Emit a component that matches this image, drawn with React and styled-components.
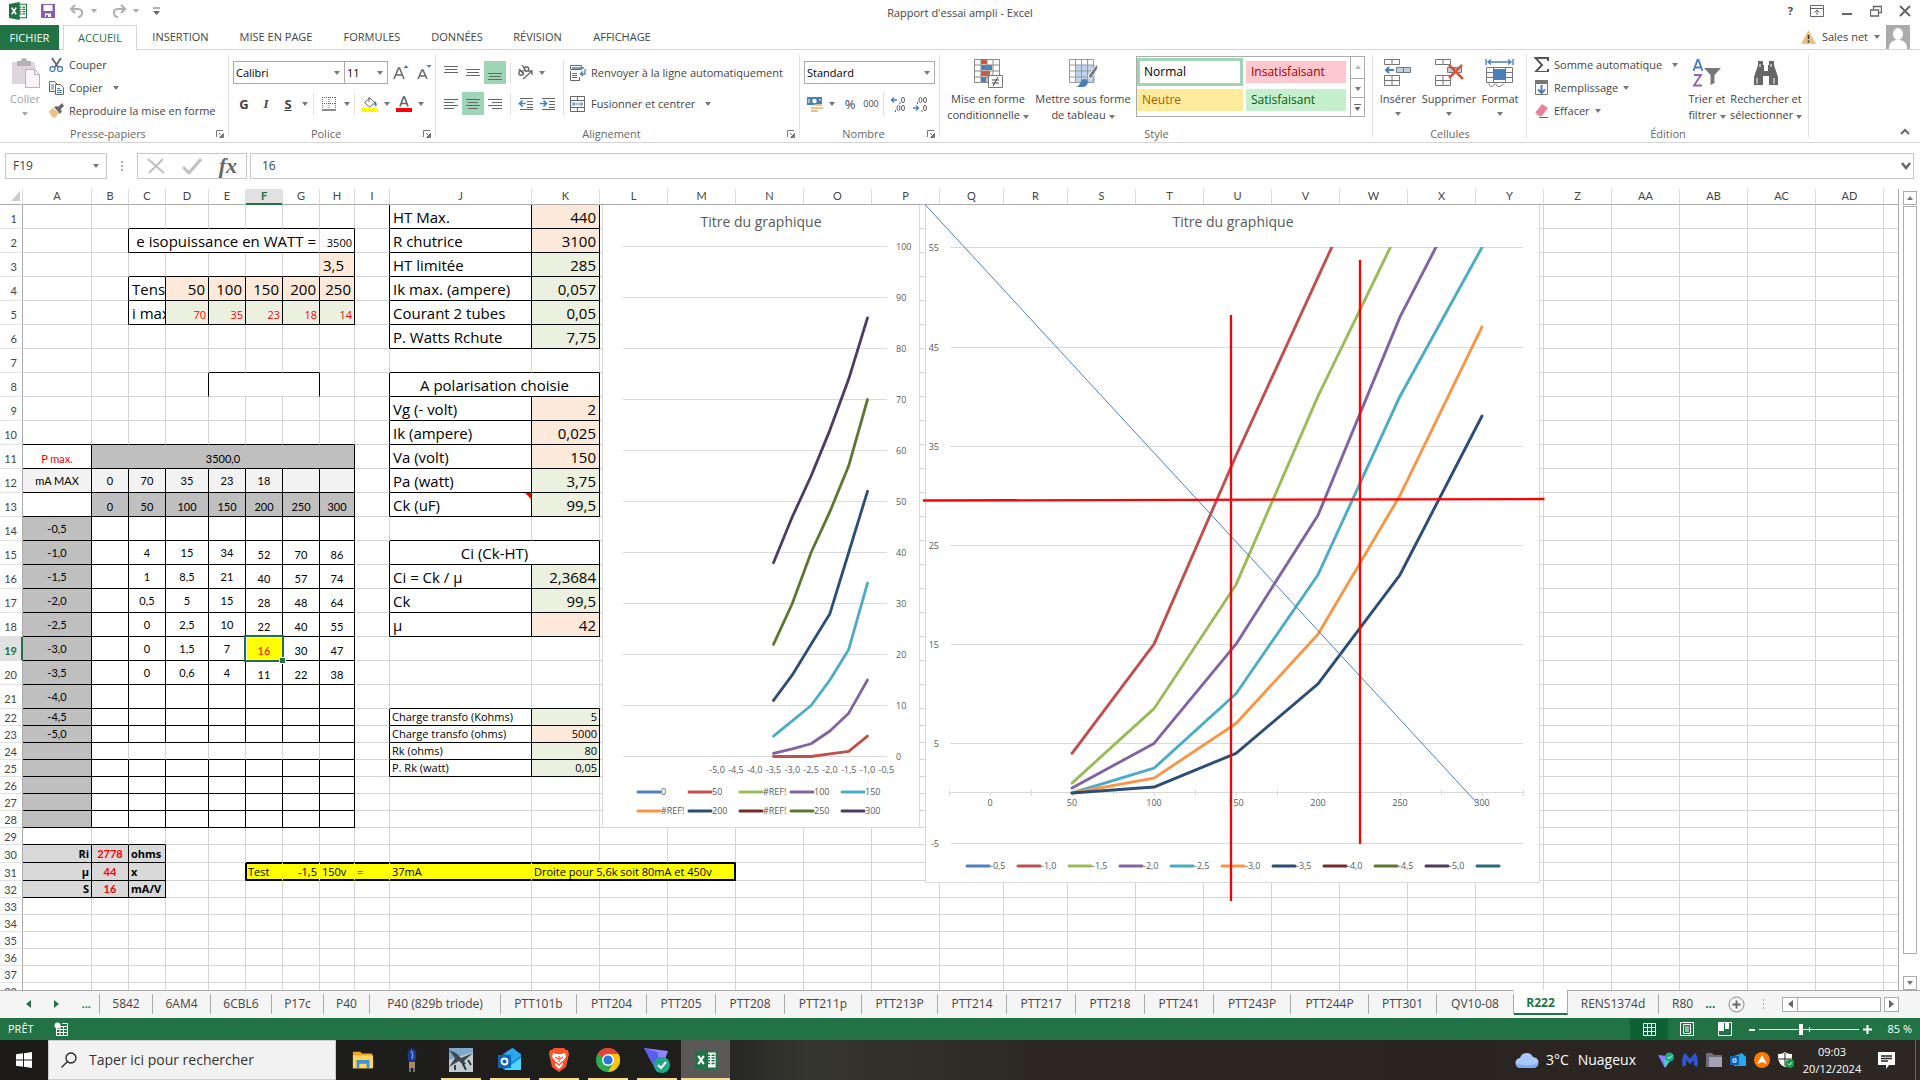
import React from 'react'
import styled, { createGlobalStyle, css } from 'styled-components'

const GlobalStyle = createGlobalStyle`
* { box-sizing: border-box; }
body { margin: 0; background: #fff; }
button, input, select { font: inherit; color: inherit; margin: 0; padding: 0; border: 0; background: none; border-radius: 0; }
`
const ui = `'Open Sans', 'Noto Sans', sans-serif`
const narrow = `Lato, 'Open Sans', sans-serif`

const Page = styled.div`
display: flex;
flex-direction: column;
height: 100vh;
overflow: hidden;
font-family: ${ui};
font-size: 11px;
line-height: 16px;
color: #444;
`
const Caret = styled.span`
display: inline-block;
flex: none;
border: 3px solid transparent;
border-top: 4px solid ${({ $color }) => $color || '#777'};
border-bottom: 0;
margin-top: ${({ $drop }) => ($drop ? 5 : 0)}px;
transform: ${({ $up }) => ($up ? 'rotate(180deg)' : 'none')};
`

/* ---------- title bar ---------- */
const TitleBar = styled.header`
display: flex;
flex: none;
align-items: center;
justify-content: space-between;
height: 25px;
padding: 0 9px 3px;
`
const Side = styled.div`
display: flex;
flex: 1;
align-items: center;
justify-content: ${({ $end }) => ($end ? 'flex-end' : 'flex-start')};
gap: ${({ $end }) => ($end ? '17px' : '14px')};
`
const Title = styled.h1`
margin: 0;
padding-top: 3px;
font-size: 11px;
font-weight: 400;
`
const PlainButton = styled.button`
display: flex;
align-items: center;
justify-content: center;
height: 20px;
gap: 6px;
`

/* ---------- ribbon tabs ---------- */
const Tabs = styled.nav`
display: flex;
flex: none;
height: 25px;
border-bottom: 1px solid #d4d4d4;
`
const Tab = styled.button`
width: ${({ $w }) => $w}px;
height: 24px;
font-size: 11px;
white-space: nowrap;
${({ $kind }) => $kind === 'file' && css`
height: 25px;
margin-right: 4px;
color: #fff;
background: #217346;
`}
${({ $kind }) => $kind === 'active' && css`
height: 25px;
color: #217346;
background: #fff;
border: 1px solid #d4d4d4;
border-bottom: 0;
`}
`
const User = styled.button`
display: flex;
align-items: center;
gap: 6px;
margin-left: auto;
margin-right: 10px;
height: 24px;
`

/* ---------- ribbon ---------- */
const Ribbon = styled.section`
display: flex;
flex: none;
position: relative;
height: 93px;
padding-top: 4px;
border-bottom: 1px solid #d4d4d4;
`
const Group = styled.div`
display: flex;
flex: none;
flex-direction: column;
width: ${({ $w }) => $w}px;
background: linear-gradient(#e1e1e1, #e1e1e1) right top / 1px 84px no-repeat;
`
const GroupBody = styled.div`
display: flex;
height: 72px;
padding-left: ${({ $pad }) => $pad}px;
`
const GroupFoot = styled.div`
display: flex;
align-items: center;
height: 16px;
color: #666;
span { flex: 1; text-align: center; }
svg { margin-right: 5px; }
`
const BigButton = styled.button`
display: flex;
flex: none;
flex-direction: column;
align-items: center;
width: ${({ $w }) => $w}px;
height: 70px;
padding-top: 4px;
white-space: nowrap;
color: ${({ $dim }) => ($dim ? '#a0a0a0' : '#444')};
svg { flex: none; margin-bottom: 3px; }
span { line-height: 16px; }
`
const Stack = styled.div`
display: flex;
flex-direction: column;
width: ${({ $w }) => ($w ? `${$w}px` : 'auto')};
margin-left: ${({ $left }) => $left || 0}px;
`
const Collapse = styled.div`
display: flex;
align-items: flex-end;
margin-left: auto;
padding-right: 10px;
`
const SmallButton = styled.button`
display: flex;
align-items: center;
gap: 5px;
height: 23px;
padding-bottom: ${({ $flat }) => ($flat ? 0 : 2)}px;
padding-left: ${({ $flat }) => ($flat ? 2 : 0)}px;
white-space: nowrap;
svg { flex: none; }
${Caret} { margin-left: ${({ $far }) => ($far ? 5 : 0)}px; }
`
const ToolRows = styled.div`
display: flex;
flex-direction: column;
gap: 8px;
padding-top: 7px;
`
const ToolRow = styled.div`
display: flex;
align-items: center;
height: 23px;
`
const Tool = styled.button`
display: flex;
align-items: center;
justify-content: center;
width: ${({ $w }) => $w || 22}px;
height: 23px;
font-size: ${({ $tiny }) => ($tiny ? 9 : 13)}px;
background: ${({ $on }) => ($on ? '#9fd5b7' : 'none')};
em { font-family: 'Liberation Serif', serif; font-weight: 700; }
u { font-weight: 700; }
`
const Line = styled.span`
width: 1px;
height: ${({ $h }) => $h || 22}px;
margin: ${({ $top }) => $top || 0}px ${({ $gap }) => $gap || 2}px 0;
background: #e1e1e1;
`
const SelectBox = styled.label`
display: flex;
align-items: center;
position: relative;
width: ${({ $w }) => $w}px;
height: 23px;
margin-left: ${({ $join }) => ($join ? '-1px' : 0)};
border: 1px solid #ababab;
color: #000;
select { width: 100%; height: 21px; padding-left: 2px; appearance: none; outline: 0; }
${Caret} { position: absolute; right: 4px; pointer-events: none; }
`
const Gallery = styled.div`
display: flex;
width: 229px;
height: 61px;
margin: 2px 0 0 4px;
border: 1px solid #ababab;
`
const Styles = styled.div`
display: grid;
flex: 1;
grid-template-columns: 106px 100px;
grid-auto-rows: 28px;
column-gap: 3px;
align-items: center;
padding-top: 1px;
`
const StyleChip = styled.button`
height: ${({ $on }) => ($on ? 28 : 22)}px;
padding-left: ${({ $on }) => ($on ? 4 : 5)}px;
text-align: left;
font-size: 12px;
color: ${({ $ink }) => $ink};
background: ${({ $bg }) => $bg};
border: ${({ $on }) => ($on ? '3px solid #9fd5b7' : '0')};
`
const GalleryNav = styled.div`
display: grid;
grid-template-rows: 21px 19px 19px;
width: 14px;
border-left: 1px solid #ababab;
button + button { border-top: 1px solid #ababab; }
`

/* ---------- formula bar ---------- */
const FormulaBar = styled.section`
display: flex;
flex: none;
align-items: center;
height: 46px;
padding: 0 6px 0 5px;
`
const Box = styled.div`
display: flex;
align-items: center;
height: 26px;
margin-left: ${({ $left }) => $left || 0}px;
border: 1px solid #c6c6c6;
${({ $w }) => ($w ? `width: ${$w}px;` : 'flex: 1;')}
padding: 0 ${({ $end, $pad }) => $end || $pad}px 0 ${({ $pad }) => $pad}px;
justify-content: space-between;
input { flex: 1; min-width: 0; outline: 0; font-size: 12px; }
`
const Fx = styled.em`
font-family: 'Liberation Serif', serif;
font-size: 22px;
font-weight: 700;
color: #666;
`
const Grip = styled.span`
width: 2px;
height: 11px;
margin: 0 ${({ $gap }) => $gap}px;
background: repeating-linear-gradient(#aaa 0 2px, transparent 2px 4px);
`

/* ---------- sheet ---------- */
const Work = styled.main`
display: flex;
flex: 1;
min-height: 0;
`
const Pane = styled.div`
flex: 1;
min-width: 0;
position: relative;
overflow: hidden;
border-right: 1px solid #ababab;
`
const Table = styled.table`
table-layout: fixed;
border-collapse: separate;
border-spacing: 0;
width: ${({ $w }) => $w}px;
font-size: 11px;
line-height: 14px;
color: #000;
`
const ColHead = styled.th`
height: 16px;
padding: 0 0 2px;
font-family: ${narrow};
font-weight: 400;
line-height: 13px;
color: ${({ $on }) => ($on ? '#217346' : '#444')};
background: ${({ $on }) => ($on ? '#e1e1e1' : '#fff')};
border-right: 1px solid #dcdcdc;
border-bottom: 1px solid #ababab;
${({ $on }) => $on && 'font-weight: 700; box-shadow: inset 0 -1px #217346; border-bottom-color: #217346;'}
`
const RowHead = styled.th`
height: ${({ $h }) => $h}px;
padding: 0 ${({ $on }) => ($on ? 4 : 5)}px ${({ $h }) => ($h > 20 ? 3 : 1)}px 0;
font-family: ${narrow};
font-weight: ${({ $on }) => ($on ? 700 : 400)};
line-height: 13px;
text-align: right;
vertical-align: bottom;
color: ${({ $on }) => ($on ? '#217346' : '#444')};
background: ${({ $on }) => ($on ? '#e1e1e1' : '#fff')};
border-right: ${({ $on }) => ($on ? '2px solid #217346' : '1px solid #ababab')};
border-bottom: 1px solid #e1e1e1;
`
const Cell = styled.td`
position: relative;
z-index: ${({ $top }) => ($top ? 1 : 'auto')};
padding: 0;
background: ${({ $bg }) => $bg || '#fff'};
border-right: 1px solid ${({ $right }) => $right};
border-bottom: 1px solid ${({ $bottom }) => $bottom};
box-shadow: ${({ $shadow }) => $shadow || 'none'};
`
const CellText = styled.div`
display: flex;
height: ${({ $h }) => $h - 1}px;
padding: 0 ${({ $big }) => ($big ? 3 : 2)}px ${({ $low }) => ($low ? 2 : 0)}px;
overflow: hidden;
white-space: nowrap;
justify-content: ${({ $align }) => ({ r: 'flex-end', c: 'center' }[$align] || 'flex-start')};
align-items: ${({ $low }) => ($low ? 'flex-end' : 'center')};
font-family: ${({ $align, $big }) => ($align === 'c' && !$big ? narrow : ui)};
font-size: ${({ $big }) => ($big ? 15 : 11)}px;
font-weight: ${({ $bold }) => ($bold ? 700 : 400)};
line-height: ${({ $big }) => ($big ? 20 : 14)}px;
color: ${({ $red }) => ($red ? '#f00' : '#000')};
`
const Selection = styled.span`
position: absolute;
inset: -2px;
border: 2px solid #217346;
box-shadow: inset 0 0 0 1px #fff;
&::after {
content: '';
position: absolute;
right: -3px;
bottom: -3px;
width: 5px;
height: 5px;
background: #217346;
outline: 1px solid #fff;
}
`
const Note = styled.span`
position: absolute;
top: 0;
right: 0;
border: 3px solid #f00;
border-left-color: transparent;
border-bottom-color: transparent;
`
const Corner = styled.svg`
display: block;
margin-left: 11px;
`
const Chart = styled.svg`
position: absolute;
z-index: 2;
left: ${({ $x }) => $x}px;
top: 16px;
background: ${({ $clear }) => ($clear ? 'none' : '#fff')};
pointer-events: none;
text { fill: #595959; font-size: 9px; }
.title { font-size: 14px; }
`
const VScroll = styled.div`
display: flex;
flex: none;
flex-direction: column;
width: 21px;
padding: 2px 3px 0 4px;
`
const ScrollButton = styled.button`
display: flex;
flex: none;
align-items: center;
justify-content: center;
width: ${({ $w }) => $w || 14}px;
height: ${({ $h }) => $h || 14}px;
border: 1px solid #ababab;
background: #fff;
`
const VThumb = styled.div`
flex: 1;
margin: 1px 0 22px;
border: 1px solid #ababab;
`

/* ---------- sheet tabs, status, taskbar ---------- */
const SheetTabs = styled.nav`
display: flex;
flex: none;
align-items: flex-start;
height: 28px;
background: #f5f5f5;
border-top: 1px solid #ababab;
`
const TabNav = styled.div`
display: flex;
flex: none;
align-items: center;
justify-content: space-between;
width: 99px;
height: 26px;
padding: 0 8px 0 26px;
color: #217346;
font-weight: 700;
`
const SheetTab = styled.button`
flex: none;
width: ${({ $w }) => $w}px;
height: 20px;
margin-top: 3px;
font-size: 12px;
white-space: nowrap;
border-right: 1px solid #ababab;
border-left: ${({ $first }) => ($first ? '1px solid #ababab' : 0)};
${({ $on }) => $on && css`
height: 25px;
margin-top: -1px;
padding-top: 2px;
font-weight: 700;
color: #217346;
background: #fff;
border-bottom: 2px solid #217346;
`}
`
const TabsEnd = styled.div`
display: flex;
flex: 1;
min-width: 0;
align-items: center;
height: 26px;
padding-left: 13px;
font-size: 12px;
white-space: nowrap;
b { margin-left: 12px; color: #217346; }
svg { flex: none; margin-left: ${({ $gap }) => $gap}px; }
`
const HThumb = styled.div`
width: 83px;
height: 15px;
margin-right: 3px;
background: #fff;
border: 1px solid #ababab;
border-left: 0;
`
const HScroll = styled.div`
display: flex;
margin-left: auto;
margin-right: 21px;
svg { margin: 0; }
`
const Status = styled.footer`
display: flex;
flex: none;
align-items: center;
height: 22px;
padding: 0 8px;
color: #fff;
background: #217346;
`
const Macro = styled.button`
display: flex;
margin-left: 20px;
`
const ViewButton = styled.button`
display: flex;
align-items: center;
justify-content: center;
width: 38px;
height: 21px;
background: ${({ $on }) => ($on ? '#0e6135' : 'none')};
`
const Zoom = styled.input`
width: 100px;
height: 14px;
margin: 0 4px;
appearance: none;
outline: 0;
background: linear-gradient(#fff, #fff) center / 100% 1px no-repeat, linear-gradient(#fff, #fff) center / 1px 5px no-repeat;
&::-webkit-slider-thumb { appearance: none; width: 4px; height: 11px; background: #fff; }
`
const Percent = styled.span`
width: 40px;
text-align: right;
white-space: nowrap;
`
const Push = styled.span`
flex: 1;
`
const Taskbar = styled.div`
display: flex;
flex: none;
align-items: center;
height: 40px;
color: #fff;
background: linear-gradient(90deg, #1c1b1a 0%, #1f1f1d 36%, #353530 42%, #2c2723 55%, #2a2420 75%, #2d2824 100%);
`
const Start = styled.button`
display: flex;
justify-content: center;
width: 48px;
`
const Search = styled.label`
display: flex;
align-items: center;
gap: 12px;
width: 288px;
height: 40px;
padding-left: 12px;
margin-right: 2px;
background: #f2f2f2;
border: 1px solid #ccc;
color: #222;
input { flex: 1; min-width: 0; font-size: 14px; outline: 0; }
input::placeholder { color: #333; opacity: 1; }
`
const TaskButton = styled.button`
display: flex;
align-items: center;
justify-content: center;
width: 49px;
height: 40px;
${({ $run }) => $run && `
background: linear-gradient(#fcdf8e, #fcdf8e) center bottom / 40px 2px no-repeat;
`}
${({ $on }) => $on && `
background: #5a5957;
box-shadow: inset 0 -2px #fcdf8e;
`}
`
const Weather = styled.button`
display: flex;
align-items: center;
gap: 7px;
margin: 0 22px 0 auto;
font-size: 14px;
span + span { margin-left: 2px; }
`
const Tray = styled.div`
display: flex;
gap: 8px;
`
const Clock = styled.div`
display: flex;
flex-direction: column;
align-items: center;
width: 76px;
line-height: 17px;
font-size: 11px;
`
const Action = styled.button`
display: flex;
width: 46px;
height: 40px;
align-items: center;
justify-content: center;
margin-right: 4px;
padding-right: 12px;
border-right: 1px solid #666;
`

/* ---------- icons ---------- */
const Ico = ({ w = 16, h = w, box, children }) => (
  <svg width={w} height={h} viewBox={box || `0 0 ${w} ${h}`} fill="none" aria-hidden="true">{children}</svg>
)
const G = '#666'
const B = '#4a7fb8'

const ExcelLogo = ({ size = 16 }) => (
  <Ico w={size} box="0 0 16 16">
    <path d="M8 2h7.5v12H8z" fill="#fff" stroke="#217346" />
    <path d="M9 4.5h2M9 6.5h2M9 8.5h2M9 10.5h2M12 4.5h2.3M12 6.5h2.3M12 8.5h2.3M12 10.5h2.3" stroke="#217346" />
    <path d="M0 1.8 9.5 0v16L0 14.2z" fill="#217346" />
    <path d="m2.4 5 4 6M6.4 5l-4 6" stroke="#fff" strokeWidth="1.5" />
  </Ico>
)
const Lines = ({ rows, y = 3 }) => (
  <Ico w={14} h={16}>
    {rows.map(([a, b], i) => <path key={i} d={`M${a} ${y + i * 3 + 0.5}H${b}`} stroke={G} />)}
  </Ico>
)
const Launcher = () => (
  <Ico w={8}><path d="M.5 7V.5H7" stroke="#777" /><path d="m3 3 3 3M7.5 3.5v4h-4z" stroke="#777" fill="#777" /></Ico>
)
const IndentIcon = ({ left }) => (
  <Ico w={16}>
    <path d="M2 2.5h13M9 5.5h6M9 8.5h6M9 11.5h6M2 13.5h13" stroke={G} />
    <path d={left ? 'M7.5 7.5H2M4.5 4.5l-3 3 3 3' : 'M0 7.5h5.5M3.5 4.5l3 3-3 3'} stroke={B} strokeWidth="1.7" />
  </Ico>
)
const DecimalIcon = ({ less }) => (
  <Ico w={16}>
    <path d={less ? 'M1 12h5M4 9.5l2.500 2.500L4 14.500' : 'M7 4H2M4 1.500L1.500 4 4 6.500'} stroke={B} strokeWidth="1.400" />
    <g fill="none" stroke={G}>
      <ellipse cx={13} cy="4" rx="1.500" ry="2.700" />
      {less && <ellipse cx="8.500" cy="4" rx="1.500" ry="2.700" />}
      <ellipse cx="13" cy="12" rx="1.500" ry="2.700" />
      {!less && <ellipse cx="8.500" cy="12" rx="1.500" ry="2.700" />}
      <path d={less ? 'M5.500 6v2M10 14v2' : 'M10 6v2M5.500 14v2'} />
    </g>
  </Ico>
)
const CellsIcon = ({ kind }) => (
  <Ico w={30} h={30}>
    {kind === 'format' ? (
      <>
        <path d="M1 1v6M28 1v6M3 4h23M6 1.500 3 4l3 2.500M23 1.500 26 4l-3 2.500" stroke={B} strokeWidth="1.400" />
        <path d="M1.500 9.500h26v15h-26zM1.500 14.500h26M1.500 19.500h26M8.500 9.500v15M20.500 9.500v15" stroke="#777" />
        <path d="M9 11h11v11H9z" fill={B} />
        <path d="M4 25.500c0 4 4 4 6 0M11 25.500c0 4 5 4 8 0" stroke="#777" />
      </>
    ) : (
      <>
        <path d="M1.500 1.500h15v5h-15zM9 1.500v5M1.500 17.500h15v10h-15zM9 17.500v10M1.500 22.500h15" stroke="#777" />
        <path d="M13.500 9.500h14v5h-14zM20.500 9.500v5" fill="#bdd2e8" stroke="#777" />
        {kind === 'insert' && <path d="M11 12H3M6 9l-3 3 3 3" stroke={B} strokeWidth="2" />}
        {kind === 'delete' && <path d="m15 7 14 14M28 7 15 20" stroke="#d65532" strokeWidth="2.500" />}
      </>
    )}
  </Ico>
)
const TableIcon = ({ brush }) => (
  <Ico w={30} h={30}>
    <path d="M1 1h26v24H1z" fill="#fff" />
    {brush ? (
      <>
        <path d="M7 7h20v18H7z" fill="#bdd2e8" />
        <path d="M1.500 1.500h24v23h-24zM1.500 7h24M1.500 13h24M1.500 19h24M7.500 1.500v23M13.500 1.500v23M19.500 1.500v23" stroke="#999" />
        <path d="m29 6-9 12 3 3 7-11z" fill="#777" stroke="#fff" />
        <path d="M8 29c5-1 4-8 9-8 4 1 4 7-2 8z" fill={B} />
      </>
    ) : (
      <>
        <path d="M8 1h6v5H8zM8 13h9v5H8z" fill="#d65532" />
        <path d="M8 7h11v5H8zM8 19h5v5H8z" fill={B} />
        <path d="M1.500 1.500h25v23h-25zM1.500 7h25M1.500 13h25M1.500 19h25M8 1.500v23M14 1.500v23M20 1.500v23" stroke="#888" />
        <path d="M15.500 17.500h14v12h-14z" fill="#fff" stroke="#777" />
        <path d="M19 22h7M19 25h7M25 19l-5 9" stroke="#444" />
      </>
    )}
  </Ico>
)

/* ---------- sheet data ---------- */
const columns = [
  ['A', 69], ['B', 37], ['C', 37], ['D', 43], ['E', 37], ['F', 37], ['G', 37], ['H', 35], ['I', 35], ['J', 142], ['K', 68],
  ['L', 68], ['M', 68], ['N', 68], ['O', 68], ['P', 68], ['Q', 64], ['R', 64], ['S', 68], ['T', 68], ['U', 68], ['V', 68],
  ['W', 68], ['X', 68], ['Y', 68], ['Z', 68], ['AA', 68], ['AB', 68], ['AC', 68], ['AD', 68], ['', 68],
]
const tableWidth = columns.reduce((sum, c) => sum + c[1], 23)
const rowHeight = r => (r <= 21 ? 24 : r === 30 || r === 31 ? 18 : 17)

const peach = '#fde9d9'
const green = '#ebf1de'
const grey = '#bfbfbf'
const pale = '#f2f2f2'
const silver = '#d9d9d9'

const cells = {
  C2: { t: 'e isopuissance en WATT =', big: 1, align: 'r', span: 5 },
  H2: { t: '3500', align: 'r', low: 1 },
  H3: { t: '3,5', big: 1, bg: peach },
  C4: { t: 'Tens', big: 1 },
  C5: { t: 'i max', big: 1 },
  E8: { t: '', span: 3 },
  A11: { t: 'P max.', align: 'c', low: 1, red: 1 },
  B11: { t: '3500,0', align: 'c', low: 1, span: 7, bg: grey },
  A12: { t: 'mA MAX', align: 'c', bg: pale },
  A13: { t: '' },
  J8: { t: 'A polarisation choisie', big: 1, align: 'c', span: 2 },
  J15: { t: 'Ci (Ck-HT)', big: 1, align: 'c', span: 2 },
  F31: { t: 'Test' },
  G31: { t: '-1,5', align: 'r' },
  H31: { t: '150v' },
  I31: { t: '=' },
  J31: { t: '37mA' },
  K31: { t: 'Droite pour 5,6k soit 80mA et 450v', span: 3 },
}
const letters = 'ABCDEFGH'.split('')
;['50', '100', '150', '200', '250'].forEach((t, i) => { cells[letters[i + 3] + 4] = { t, big: 1, align: 'r', bg: peach } })
;['70', '35', '23', '18', '14'].forEach((t, i) => { cells[letters[i + 3] + 5] = { t, align: 'r', low: 1, red: 1, bg: green } })
;['0', '70', '35', '23', '18', '', ''].forEach((t, i) => { cells[letters[i + 1] + 12] = { t, align: 'c', bg: pale } })
;['0', '50', '100', '150', '200', '250', '300'].forEach((t, i) => { cells[letters[i + 1] + 13] = { t, align: 'c', low: 1, bg: grey } })
for (let r = 14; r <= 28; r++) {
  const v = (r - 13) / 2
  cells['A' + r] = { t: r < 24 ? '-' + v.toFixed(1).replace('.', ',') : '', align: 'c', bg: grey }
}
const readings = [
  [4, 15, 34, 52, 70, 86],
  [1, 8.5, 21, 40, 57, 74],
  [0.5, 5, 15, 28, 48, 64],
  [0, 2.5, 10, 22, 40, 55],
  [0, 1.5, 7, 16, 30, 47],
  [0, 0.6, 4, 11, 22, 38],
]
readings.forEach((row, i) => row.forEach((v, j) => {
  cells[letters[j + 2] + (15 + i)] = { t: String(v).replace('.', ','), align: 'c', low: j > 2 }
}))
Object.assign(cells.F19, { bg: '#ff0', red: 1, selected: 1 })

const pair = (row, label, value, bg, big = 1) => {
  cells['J' + row] = { t: label, big }
  cells['K' + row] = { t: value, big, align: 'r', bg }
}
pair(1, 'HT Max.', '440', peach)
pair(2, 'R chutrice', '3100', peach)
pair(3, 'HT limitée', '285', green)
pair(4, 'Ik max. (ampere)', '0,057', green)
pair(5, 'Courant 2 tubes', '0,05', green)
pair(6, 'P. Watts Rchute', '7,75', green)
pair(9, 'Vg (- volt)', '2', peach)
pair(10, 'Ik (ampere)', '0,025', peach)
pair(11, 'Va (volt)', '150', peach)
pair(12, 'Pa (watt)', '3,75', green)
pair(13, 'Ck (uF)', '99,5', green)
pair(16, 'Ci = Ck / µ', '2,3684', green)
pair(17, 'Ck', '99,5', green)
pair(18, 'µ', '42', peach)
pair(22, 'Charge transfo (Kohms)', '5', green, 0)
pair(23, 'Charge transfo (ohms)', '5000', peach, 0)
pair(24, 'Rk (ohms)', '80', green, 0)
pair(25, 'P. Rk (watt)', '0,05', green, 0)
cells.J13.note = 1
;[['Ri', '2778', 'ohms'], ['µ', '44', 'x'], ['S', '16', 'mA/V']].forEach(([a, b, c], i) => {
  cells['A' + (30 + i)] = { t: a, align: 'r', bold: 1, bg: silver }
  cells['B' + (30 + i)] = { t: b, align: 'c', bold: 1, red: 1, bg: silver }
  cells['C' + (30 + i)] = { t: c, bold: 1, bg: silver }
})

// black edges, keyed by "column index,row"
const rights = new Set()
const bottoms = new Set()
const frame = (c1, r1, c2, r2, inner = true) => {
  for (let r = r1; r <= r2; r++) {
    for (let c = c1; c <= c2; c++) {
      if (inner || c === c2) rights.add(`${c},${r}`)
      if (inner || r === r2) bottoms.add(`${c},${r}`)
      if (c === c1) rights.add(`${c - 1},${r}`)
      if (r === r1) bottoms.add(`${c},${r - 1}`)
    }
  }
}
frame(2, 2, 7, 2, false)
frame(2, 4, 7, 5)
frame(4, 8, 6, 8, false)
;[4, 5, 6].forEach(c => bottoms.delete(`${c},8`))
rights.add('7,3')
frame(0, 11, 7, 23)
frame(0, 24, 7, 24, false)
rights.add('0,24')
frame(0, 25, 7, 28)
frame(0, 30, 2, 32)
frame(9, 1, 10, 6)
frame(9, 8, 10, 13)
frame(9, 15, 10, 18)
frame(9, 22, 10, 25)
frame(5, 31, 12, 31, false)

const isTest = (c, r) => r === 31 && c >= 5 && c <= 12
const SheetRow = ({ r }) => {
  const h = rowHeight(r)
  const out = []
  for (let c = 0; c < columns.length; c++) {
    const cell = cells[columns[c][0] + r] || {}
    const span = cell.span || 1
    const last = c + span - 1
    const test = isTest(c, r)
    const line = test ? '#ff0' : '#d4d4d4'
    const shadow = test && ['inset 0 1px #000', 'inset 0 -1px #000', c === 5 && 'inset 1px 0 #000', last === 12 && 'inset -1px 0 #000'].filter(Boolean).join(', ')
    out.push(
      <Cell key={c} colSpan={span} $bg={cell.bg || (test && '#ff0')} $shadow={shadow} $top={cell.selected}
        $right={rights.has(`${last},${r}`) ? '#000' : line} $bottom={bottoms.has(`${c},${r}`) ? '#000' : line}>
        {cell.t && (
          <CellText $h={h} $big={cell.big} $align={cell.align} $low={cell.low} $red={cell.red} $bold={cell.bold}>{cell.t}</CellText>
        )}
        {cell.selected && <Selection />}
        {cell.note && <Note />}
      </Cell>
    )
    c = last
  }
  return <tr><RowHead scope="row" $h={h} $on={r === 19}>{r}</RowHead>{out}</tr>
}

/* ---------- charts ---------- */
const palette = ['#4f81bd', '#c0504d', '#9bbb59', '#8064a2', '#4bacc6', '#f79646', '#2c4d75', '#772c2a', '#5f7530', '#4d3b62', '#276a7c']

const Legend = ({ x, y, color, label }) => (
  <g>
    <path d={`M${x + 1} ${y}h22`} stroke={color} strokeWidth="3" strokeLinecap="round" />
    <text x={x + 24} y={y + 3}>{label}</text>
  </g>
)
const GridChart = () => {
  const y = v => 551.5 - v * 5.1
  const x = i => 265.5 - i * 18.8
  const colors = [1, 3, 4, 6, 8, 9]
  const legend = [['0', 0], ['50', 1], ['#REF!', 2], ['100', 3], ['150', 4], ['#REF!', 5], ['200', 6], ['#REF!', 7], ['250', 8], ['300', 9]]
  return (
    <Chart $x={602} width="318" height="623" fill="none">
      <path d="M.5 0V622.500H317.500V0" stroke="#d9d9d9" />
      <text className="title" x="159" y="22" textAnchor="middle">Titre du graphique</text>
      {[0, 10, 20, 30, 40, 50, 60, 70, 80, 90, 100].map(v => (
        <g key={v}>
          <path d={`M21 ${Math.floor(y(v)) + 0.5}H285`} stroke="#d9d9d9" />
          <text x="294" y={y(v) + 3}>{v}</text>
        </g>
      ))}
      {['-0,5', '-1,0', '-1,5', '-2,0', '-2,5', '-3,0', '-3,5', '-4,0', '-4,5', '-5,0'].map((t, i) => (
        <text key={t} x={x(i - 1)} y="568" textAnchor="middle">{t}</text>
      ))}
      {colors.map((color, j) => (
        <polyline key={j} points={readings.map((row, i) => `${x(i)},${y(row[j])}`).join(' ')}
          stroke={palette[color]} strokeWidth="2.800" strokeLinecap="round" strokeLinejoin="round" />
      ))}
      {legend.map(([t, c], i) => <Legend key={i} x={35 + (i % 5) * 51} y={i < 5 ? 587 : 606} color={palette[c]} label={t} />)}
    </Chart>
  )
}
const PlateChart = () => {
  const y = v => 588 - v * 9.92
  const x = v => 65 + v * 1.64
  return (
    <Chart $x={925} width="615" height="678" fill="none">
      <clipPath id="plot"><path d="M20 42h580v600H20z" /></clipPath>
      <path d="M.5 0V677.500H614.500V0" stroke="#d9d9d9" />
      <text className="title" x="308" y="22" textAnchor="middle">Titre du graphique</text>
      {[55, 45, 35, 25, 15, 5, -5].map(v => (
        <g key={v}>
          <path d={`M25 ${Math.round(y(v)) + 0.5}H598`} stroke="#d9d9d9" />
          <text x="14" y={y(v) + 4} textAnchor="end">{v}</text>
        </g>
      ))}
      <path d="M25 587.500H598" stroke="#d9d9d9" />
      {[0, 50, 100, 150, 200, 250, 300].map(v => (
        <g key={v}>
          <path d={`M${x(v) + 0.5} 588v3M${x(v) - 40.5} 585v6`} stroke="#d9d9d9" />
          <text x={x(v)} y="601" textAnchor="middle">{v}</text>
        </g>
      ))}
      <path d="M598.500 585v6" stroke="#d9d9d9" />
      <g clipPath="url(#plot)">
        {readings.map((row, i) => (
          <polyline key={i} points={row.map((v, j) => `${x(50 + j * 50)},${y(v)}`).join(' ')}
            stroke={palette[i + 1]} strokeWidth="2.900" strokeLinecap="round" strokeLinejoin="round" />
        ))}
      </g>
      {palette.map((c, i) => (
        <Legend key={i} x={41 + i * 51} y={661} color={c} label={i < 10 ? ((i + 1) / -2).toFixed(1).replace('.', ',') : ''} />
      ))}
    </Chart>
  )
}

const ribbonTabs = [['FICHIER', 59, 'file'], ['ACCUEIL', 74, 'active'], ['INSERTION', 87], ['MISE EN PAGE', 104], ['FORMULES', 88], ['DONNÉES', 82], ['RÉVISION', 79], ['AFFICHAGE', 90]]
const sheets = [['5842', 54], ['6AM4', 58], ['6CBL6', 61], ['P17c', 52], ['P40', 46], ['P40 (829b triode)', 131], ['PTT101b', 76], ['PTT204', 70], ['PTT205', 69], ['PTT208', 69], ['PTT211p', 77], ['PTT213P', 76], ['PTT214', 69], ['PTT217', 69], ['PTT218', 69], ['PTT241', 69], ['PTT243P', 77], ['PTT244P', 78], ['PTT301', 68], ['QV10-08', 77], ['R222', 54], ['RENS1374d', 91]]

const RibbonBar = () => (
  <Ribbon>
    <Group $w={229}>
      <GroupBody $pad={7}>
        <BigButton $w={36} $dim>
          <Ico w={30} h={30}>
            <path d="M2 4h23v22H2z" fill="#ddd7dd" /><path d="M7 3h4c0-4 6-4 6 0h4v5H7z" fill="#b5b1b5" />
            <path d="M15.500 11.500h9l5 5v13h-14z" fill="#fbf5fb" stroke="#b5b1b5" /><path d="M24.500 11.500v5h5" stroke="#b5b1b5" />
          </Ico>
          <span>Coller</span><Caret $drop $color="#aaa" />
        </BigButton>
        <Stack $left={6}>
          <SmallButton>
            <Ico w={15}><path d="M3 1l6 9M12 1 6 10" stroke={G} strokeWidth="1.800" /><circle cx="3.500" cy="12" r="2.500" stroke={B} strokeWidth="1.300" /><circle cx="11" cy="12" r="2.500" stroke={B} strokeWidth="1.300" /></Ico>
            Couper
          </SmallButton>
          <SmallButton $far>
            <Ico w={15}><path d="M.5 1.500h5l3 3v7h-8z" fill="#fff" stroke={G} /><path d="M6.500 4.500h5l3 3v7h-8z" fill="#fff" stroke={G} /><path d="M2 5h3M2 7h3M2 9h3M8 8.500h3M8 10.500h5M8 12.500h5" stroke={B} /></Ico>
            Copier <Caret />
          </SmallButton>
          <SmallButton>
            <Ico w={15}><path d="m0 8 4-3 6 5-4 5C3 14 1 12 0 8z" fill="#ecc185" /><path d="m5 4 3-1 5 5-2 3zM9 4l4-4 2 3-4 4z" fill={G} /></Ico>
            Reproduire la mise en forme
          </SmallButton>
        </Stack>
      </GroupBody>
      <GroupFoot><span>Presse-papiers</span><Launcher /></GroupFoot>
    </Group>
    <Group $w={207}>
      <GroupBody $pad={4}>
        <ToolRows>
          <ToolRow>
            <SelectBox $w={112}><select aria-label="Police"><option>Calibri</option></select><Caret /></SelectBox>
            <SelectBox $w={44} $join><select aria-label="Taille"><option>11</option></select><Caret /></SelectBox>
            <Tool $w={26} aria-label="Agrandir"><Ico w={16}><path d="M1 14 5.500 3h1L11 14M3 10h6" stroke={G} strokeWidth="1.500" /><path d="m13 0 2.500 3h-5z" fill={B} /></Ico></Tool>
            <Tool $w={20} aria-label="Réduire"><Ico w={15} h={16}><path d="M1 14 5 5h1l4 9M3 11h5" stroke={G} strokeWidth="1.500" /><path d="m12 3 2.500-3h-5z" fill={B} /></Ico></Tool>
          </ToolRow>
          <ToolRow>
            <Tool><b>G</b></Tool>
            <Tool><em>I</em></Tool>
            <Tool><u>S</u></Tool>
            <Tool $w={12}><Caret /></Tool>
            <Line />
            <Tool $w={26} aria-label="Bordures"><Ico w={14}><path d="M.5 0v12M7 0v12M13.500 0v12M0 .5h14M0 6.500h14" stroke={G} strokeDasharray="1 1" /><path d="M0 13h14" stroke={G} strokeWidth="1.500" /></Ico></Tool>
            <Tool $w={10}><Caret /></Tool>
            <Line />
            <Tool $w={26} aria-label="Remplissage"><Ico w={16}><path d="M2.500 6.500 8 2l5 5-5.500 4z" fill="#fff" stroke={G} /><path d="M7 6V1" stroke={G} /><path d="M13 5c2 2 2 4 1 6l-2-3z" fill={B} /><path d="M0 12h16v4H0z" fill="#ff0" /></Ico></Tool>
            <Tool $w={8}><Caret /></Tool>
            <Tool $w={26} aria-label="Couleur"><Ico w={16}><path d="M4 10.500 7.500 1h1l3.500 9.500M5 7.500h6" stroke={G} strokeWidth="1.700" /><path d="M0 12h16v4H0z" fill="#f00" /></Ico></Tool>
            <Tool $w={8}><Caret /></Tool>
          </ToolRow>
        </ToolRows>
      </GroupBody>
      <GroupFoot><span>Police</span><Launcher /></GroupFoot>
    </Group>
    <Group $w={364}>
      <GroupBody $pad={4}>
        <ToolRows>
          <ToolRow>
            <Tool aria-label="Haut"><Lines rows={[[0, 14], [1, 13], [0, 14]]} y={1} /></Tool>
            <Tool aria-label="Milieu"><Lines rows={[[0, 14], [1, 13], [0, 14]]} y={4} /></Tool>
            <Tool $on aria-label="Bas"><Lines rows={[[0, 14], [1, 13], [0, 14]]} y={8} /></Tool>
            <Line $gap={4} />
            <Tool aria-label="Orientation"><Ico w={18}><circle cx="4" cy="9" r="2.200" stroke={G} strokeWidth="1.400" /><path d="m2 5 5 5" stroke={G} strokeWidth="1.400" /><circle cx="9.500" cy="5" r="2.200" stroke={G} strokeWidth="1.400" /><path d="m5 1 4 6M6 15l9-8M15 11V7h-4" stroke={G} strokeWidth="1.300" /></Ico></Tool>
            <Tool $w={10}><Caret /></Tool>
          </ToolRow>
          <ToolRow>
            <Tool aria-label="Gauche"><Lines rows={[[0, 14], [0, 10], [0, 14], [0, 10]]} /></Tool>
            <Tool $on aria-label="Centre"><Lines rows={[[0, 14], [2, 12], [0, 14], [2, 12]]} /></Tool>
            <Tool aria-label="Droite"><Lines rows={[[0, 14], [4, 14], [0, 14], [4, 14]]} /></Tool>
            <Line $gap={4} />
            <Tool aria-label="Diminuer le retrait"><IndentIcon left /></Tool>
            <Tool aria-label="Augmenter le retrait"><IndentIcon /></Tool>
          </ToolRow>
        </ToolRows>
        <Line $h={55} $top={6} $gap={4} />
        <ToolRows>
          <SmallButton $flat>
            <Ico><path d="M.5.5h11v4H.5zM.5 6v9.500h9V12M2 8.500h5M2 10.500h5M2 12.500h5" stroke={G} /><path d="M2 3h12M15 4v5h-4M12.500 6.500 10.500 9l2.500 2" stroke={B} strokeWidth="1.300" /></Ico>
            Renvoyer à la ligne automatiquement
          </SmallButton>
          <SmallButton $far $flat>
            <Ico><path d="M.5.5h14v15H.5zM.5 4.500h14M.5 11.500h14M7.500.5v4M7.500 11.500v4" stroke={G} /><path d="M2 8h11M4.500 6 2.500 8l2 2M10.500 6l2 2-2 2" stroke={B} /></Ico>
            Fusionner et centrer <Caret />
          </SmallButton>
        </ToolRows>
      </GroupBody>
      <GroupFoot><span>Alignement</span><Launcher /></GroupFoot>
    </Group>
    <Group $w={140}>
      <GroupBody $pad={4}>
        <ToolRows>
          <ToolRow><SelectBox $w={131}><select aria-label="Format de nombre"><option>Standard</option></select><Caret /></SelectBox></ToolRow>
          <ToolRow>
            <Tool aria-label="Comptabilité"><Ico><path d="M0 1h15v8H0z" fill={B} /><circle cx="7.500" cy="5" r="2.200" fill="#fff" /><path d="M2 3v4M13 3v2" stroke="#fff" /><path d="M8 8h7v2H8zM9 11h7v2H9zM4 11h6v2H4zM4 14h7v2H4z" fill="#ecc185" /></Ico></Tool>
            <Tool $w={12}><Caret /></Tool>
            <Tool $w={24}>%</Tool>
            <Tool $w={18} $tiny>000</Tool>
            <Line $gap={3} />
            <Tool aria-label="Ajouter une décimale"><DecimalIcon /></Tool>
            <Tool aria-label="Réduire les décimales"><DecimalIcon less /></Tool>
          </ToolRow>
        </ToolRows>
      </GroupBody>
      <GroupFoot><span>Nombre</span><Launcher /></GroupFoot>
    </Group>
    <Group $w={433}>
      <GroupBody $pad={2}>
        <BigButton $w={92}><TableIcon /><span>Mise en forme</span><span>conditionnelle <Caret /></span></BigButton>
        <BigButton $w={98}><TableIcon brush /><span>Mettre sous forme</span><span>de tableau <Caret /></span></BigButton>
        <Gallery>
          <Styles>
            <StyleChip $on $ink="#000" $bg="#fff">Normal</StyleChip>
            <StyleChip $ink="#9c0006" $bg="#ffc7ce">Insatisfaisant</StyleChip>
            <StyleChip $ink="#9c6500" $bg="#ffeb9c">Neutre</StyleChip>
            <StyleChip $ink="#006100" $bg="#c6efce">Satisfaisant</StyleChip>
          </Styles>
          <GalleryNav>
            <PlainButton aria-label="Haut"><Caret $up $color="#bbb" /></PlainButton>
            <PlainButton aria-label="Bas"><Caret /></PlainButton>
            <PlainButton aria-label="Autres"><Ico w={7}><path d="M0 .5h7" stroke={G} /><path d="M.5 3h6l-3 4z" fill={G} /></Ico></PlainButton>
          </GalleryNav>
        </Gallery>
      </GroupBody>
      <GroupFoot><span>Style</span></GroupFoot>
    </Group>
    <Group $w={154}>
      <GroupBody $pad={4}>
        <BigButton $w={42}><CellsIcon kind="insert" /><span>Insérer</span><Caret $drop /></BigButton>
        <BigButton $w={60}><CellsIcon kind="delete" /><span>Supprimer</span><Caret $drop /></BigButton>
        <BigButton $w={42}><CellsIcon kind="format" /><span>Format</span><Caret $drop /></BigButton>
      </GroupBody>
      <GroupFoot><span>Cellules</span></GroupFoot>
    </Group>
    <Group $w={282}>
      <GroupBody $pad={7}>
        <Stack $w={152}>
          <SmallButton $far><Ico w={15}><path d="M14 4V1H1.500L8 8l-6.500 7H14v-3" stroke="#555" strokeWidth="2" /></Ico>Somme automatique <Caret /></SmallButton>
          <SmallButton><Ico w={15}><path d="M1.500.5h12v14h-12z" stroke="#777" /><path d="M1 0h13v4H1z" fill="#777" /><path d="M7.500 5v8M4 9.500l3.500 3.500L11 9.500" stroke={B} strokeWidth="2" /></Ico>Remplissage<Caret /></SmallButton>
          <SmallButton><Ico w={15}><path d="m8 1 6 4-6 8H3L1 10z" fill="#e8829a" /><path d="m1 10 5 4" stroke="#fff" /><path d="M5 14.500h9" stroke={G} /></Ico>Effacer<Caret /></SmallButton>
        </Stack>
        <BigButton $w={42}>
          <Ico w={30} h={30}>
            <path d="M1.500 13 5.500 2h1l4 11M3 9.500h6" stroke={B} strokeWidth="1.900" /><path d="M2 17h7L2 27.500h8" stroke="#9163b5" strokeWidth="1.900" />
            <path d="M12 10h17l-6.500 7v8l-4 2V17z" fill="#777" />
          </Ico>
          <span>Trier et</span><span>filtrer <Caret /></span>
        </BigButton>
        <BigButton $w={76}>
          <Ico w={28} h={30}>
            <path d="M6 3h5v4h1v6h4V7h1V3h5v4l4 12v8h-9v-9h-6v9H2v-8L6 7z" fill="#666" />
            <path d="M5 20v6M8 6v3M19 6v3M22 20v6" stroke="#fff" />
          </Ico>
          <span>Rechercher et</span><span>sélectionner <Caret /></span>
        </BigButton>
      </GroupBody>
      <GroupFoot><span>Édition</span></GroupFoot>
    </Group>
    <Collapse>
      <PlainButton aria-label="Réduire le ruban"><Ico w={10} h={8}><path d="m1 6 4-4 4 4" stroke={G} strokeWidth="2" /></Ico></PlainButton>
    </Collapse>
  </Ribbon>
)

const App = () => {
  const rows = Array.from({ length: 38 }, (_, i) => i + 1)
  return (
    <Page>
      <GlobalStyle />
      <TitleBar>
        <Side>
          <ExcelLogo size={18} />
          <PlainButton aria-label="Enregistrer"><Ico w={14}><path d="M0 0h14v14H0z" fill="#8a5bb0" /><path d="M2.500 1h9v6h-9zM4 9.500h6V13H4z" fill="#fff" /><path d="M5 11h2v3H5z" fill="#8a5bb0" /></Ico></PlainButton>
          <PlainButton aria-label="Annuler"><Ico w={16} h={14}><path d="M2 5h7c6 0 5 8 0 8M6 1 2 5l4 4" stroke="#b0b0b0" strokeWidth="2.200" /></Ico><Caret $color="#aaa" /></PlainButton>
          <PlainButton aria-label="Rétablir"><Ico w={16} h={14}><path d="M14 5H7c-6 0-5 8 0 8M10 1l4 4-4 4" stroke="#b0b0b0" strokeWidth="2.200" /></Ico><Caret $color="#aaa" /></PlainButton>
          <PlainButton aria-label="Personnaliser"><Ico w={7} h={8}><path d="M0 1h7" stroke={G} /><path d="M0 4h7L3.500 8z" fill={G} /></Ico></PlainButton>
        </Side>
        <Title>Rapport d'essai ampli - Excel</Title>
        <Side $end>
          <PlainButton><b>?</b></PlainButton>
          <PlainButton aria-label="Options du ruban"><Ico w={14} h={12}><path d="M.5.5h13v11H.5zM.5 3.500h13M7 10V5M4.500 7.500 7 5l2.500 2.500" stroke={G} /></Ico></PlainButton>
          <PlainButton aria-label="Réduire"><Ico w={12} h={12}><path d="M1 9h10" stroke={G} strokeWidth="2" /></Ico></PlainButton>
          <PlainButton aria-label="Restaurer"><Ico w={12} h={12}><path d="M3.500 4V1.500h8v6H9M.5 5h8v6h-8z" stroke={G} strokeWidth="1.300" /></Ico></PlainButton>
          <PlainButton aria-label="Fermer"><Ico w={12} h={12}><path d="m1 1 10 10M11 1 1 11" stroke={G} strokeWidth="2" /></Ico></PlainButton>
        </Side>
      </TitleBar>
      <Tabs>
        {ribbonTabs.map(([name, w, kind]) => <Tab key={name} $w={w} $kind={kind}>{name}</Tab>)}
        <User>
          <Ico w={15} h={14}><path d="M7.500 0 15 14H0z" fill="#ecc185" /><path d="M7.500 5v4M7.500 10.500v2" stroke="#333" strokeWidth="1.600" /></Ico>
          Sales net
          <Caret />
          <Ico w={24} h={24}><path d="M0 0h24v24H0z" fill="#ababab" /><ellipse cx="12" cy="9" rx="5" ry="6" fill="#fff" /><path d="M3 24c0-7 4-9 9-9s9 2 9 9z" fill="#fff" /></Ico>
        </User>
      </Tabs>
      <RibbonBar />
      <FormulaBar>
        <Box $w={102} $pad={7}><input aria-label="Zone Nom" defaultValue="F19" /><Caret /></Box>
        <Grip $gap={14} />
        <Box $w={110} $pad={9}>
          <Ico w={18} h={16}><path d="m1 1 16 14M16 1 2 15" stroke="#c0c0c0" strokeWidth="2" /></Ico>
          <Ico w={20} h={16}><path d="m1 9 6 6L19 1" stroke="#c0c0c0" strokeWidth="3" /></Ico>
          <Fx>fx</Fx>
        </Box>
        <Box $pad={11} $end={2} $left={3}><input aria-label="Barre de formule" defaultValue="16" /><Ico w={10} h={8}><path d="m1 1 4 5 4-5" stroke={G} strokeWidth="2.500" /></Ico></Box>
      </FormulaBar>
      <Work>
        <Pane>
          <Table $w={tableWidth}>
            <colgroup>
              <col width="23" />
              {columns.map(([name, w]) => <col key={name} width={w} />)}
            </colgroup>
            <thead>
              <tr>
                <ColHead aria-label="Tout sélectionner"><Corner width="9" height="10"><path d="M9 0v10H0z" fill="#ccc" /></Corner></ColHead>
                {columns.map(([name]) => <ColHead key={name} scope="col" $on={name === 'F'}>{name}</ColHead>)}
              </tr>
            </thead>
            <tbody>{rows.map(r => <SheetRow key={r} r={r} />)}</tbody>
          </Table>
          <GridChart />
          <PlateChart />
          <Chart $x={920} $clear width="630" height="700" fill="none">
            <path d="M5.500 0 557 598" stroke="#4a7ebb" />
            <path d="M3 295.500 624.500 294M311 110v586M440 55v584" stroke="#f00" strokeWidth="2.300" />
          </Chart>
        </Pane>
        <VScroll>
          <ScrollButton aria-label="Défiler vers le haut"><Caret $up /></ScrollButton>
          <VThumb />
          <ScrollButton aria-label="Défiler vers le bas"><Caret /></ScrollButton>
        </VScroll>
      </Work>
      <SheetTabs>
        <TabNav>
          <Ico w={5} h={8}><path d="M5 0v8L0 4z" fill="#217346" /></Ico>
          <Ico w={5} h={8}><path d="M0 0v8l5-4z" fill="#217346" /></Ico>
          <span>...</span>
        </TabNav>
        {sheets.map(([name, w], i) => <SheetTab key={name} $w={w} $first={i === 0} $on={name === 'R222'}>{name}</SheetTab>)}
        <TabsEnd $gap={13}>
          R80 <b>...</b>
          <Ico w={17}><circle cx="8.500" cy="8.500" r="7.500" stroke="#888" /><path d="M8.500 4.500v8M4.500 8.500h8" stroke={G} strokeWidth="1.800" /></Ico>
          <Grip $gap={18} />
          <HScroll>
            <ScrollButton $w={16} $h={15} aria-label="Gauche"><Ico w={5} h={8}><path d="M5 0v8L0 4z" fill={G} /></Ico></ScrollButton>
            <HThumb />
            <ScrollButton $w={15} $h={15} aria-label="Droite"><Ico w={5} h={8}><path d="M0 0v8l5-4z" fill={G} /></Ico></ScrollButton>
          </HScroll>
        </TabsEnd>
      </SheetTabs>
      <Status>
        <span>PRÊT</span>
        <Macro aria-label="Enregistrer une macro"><Ico w={14}><path d="M2.500 4.500h11v9h-11zM2 7.500h11M2 10.500h11M6 5v8M9.500 5v8M8 1.500h5.500v3" stroke="#fff" /><circle cx="3.500" cy="3.500" r="3" fill="#fff" /></Ico></Macro>
        <Push />
        <ViewButton $on aria-label="Normal"><Ico w={13}><path d="M.5.5h12v12H.5zM.5 4.500h12M.5 8.500h12M4.500.5v12M8.500.5v12" stroke="#fff" /></Ico></ViewButton>
        <ViewButton aria-label="Mise en page"><Ico w={14}><path d="M.5.5h13v13H.5zM3.500 2.500h7v9h-7zM5 5h4M5 7h4M5 9h4" stroke="#fff" /></Ico></ViewButton>
        <ViewButton aria-label="Sauts de page"><Ico w={14}><path d="M.5.5h13v13H.5z" stroke="#fff" /><path d="M1 1h5v8H1zM7 1h4v6H7z" fill="#fff" /></Ico></ViewButton>
        <Ico w={11}><path d="M5 6h6" stroke="#fff" strokeWidth="2" /></Ico>
        <Zoom type="range" aria-label="Zoom" defaultValue="42" />
        <Ico w={9}><path d="M0 4.500h9M4.500 0v9" stroke="#fff" strokeWidth="2" /></Ico>
        <Percent>85 %</Percent>
      </Status>
      <Taskbar>
        <Start aria-label="Démarrer"><Ico w={16}><path d="M0 2.300 7 1.300v6.200H0zM8 1.200 16 0v7.500H8zM0 8.500h7v6.200l-7-1zM8 8.500h8V16l-8-1.200z" fill="#fff" /></Ico></Start>
        <Search>
          <Ico><circle cx="10" cy="6" r="5" stroke="#222" strokeWidth="1.300" /><path d="m6.500 9.500-6 6" stroke="#222" strokeWidth="1.300" /></Ico>
          <input placeholder="Taper ici pour rechercher" aria-label="Rechercher" />
        </Search>
        <TaskButton aria-label="Explorateur"><Ico w={22} box="0 0 24 24"><path d="M1 3h8l2 2h11v16H1z" fill="#f0a81c" /><path d="M1 7h22v14H1z" fill="#fcd462" /><path d="M5 12h14v9h-3v-5H8v5H5z" fill="#3f93d6" /></Ico></TaskButton>
        <TaskButton aria-label="Tube"><Ico w={24}><path d="M12 0c5 1 5 9 3 14H9C7 9 7 1 12 0z" fill="#1d3a8f" /><path d="M11 3c2 1 2 5 1 8" stroke="#6a9af0" strokeWidth="1.500" /><path d="M9 14h6v6H9z" fill="#a98a5e" /><path d="M10 20v4M14 20v4" stroke="#ccc" /></Ico></TaskButton>
        <TaskButton $run aria-label="Simulateur"><Ico w={24}><path d="M0 0h24v24H0z" fill="#7fa9cc" /><path d="M0 12 24 4v20H0z" fill="#c5ccd0" /><path d="m0 2 7 3 5 5 12-5-9 8 2 3-3 1-4-4-10 6 6-9z" fill="#3a4650" /><path d="M6 17v5M14 16l3 6M19 12l3 5" stroke="#28323c" strokeWidth="1.800" /></Ico></TaskButton>
        <TaskButton $run aria-label="Outlook"><Ico w={24}><path d="m5 6 9-6 9 6v15H5z" fill="#1490df" /><path d="m7 5 8-5 8 7-8 6z" fill="#28a8ea" /><path d="M6 22 23 10v12z" fill="#50d9ff" /><path d="M0 7h13v13H0z" fill="#0f64b8" /><circle cx="6.500" cy="13.500" r="3" stroke="#fff" strokeWidth="1.800" /></Ico></TaskButton>
        <TaskButton $run aria-label="Brave"><Ico w={22} h={24} box="1 0 22 24"><path d="M7 0h10l2 2h2l1 4-3 13-7 5-7-5L2 6l1-4h2z" fill="#fb542b" /><path d="m6 5 3 1h6l3-1 1 4-4 5 1 3-4 4-4-4 1-3-4-5z" fill="#fff" /><path d="m8 9 3 2M16 9l-3 2M12 8v6M9 14l3 3 3-3" stroke="#fb542b" strokeWidth="1.300" /></Ico></TaskButton>
        <TaskButton $run aria-label="Chrome"><Ico w={24}><circle cx="12" cy="12" r="12" fill="#2da94f" /><path d="M1.600 6a12 12 0 0 1 20.800 0H12v6z" fill="#ea4335" /><path d="M22.400 6A12 12 0 0 1 12 24l5-9-5-9z" fill="#fdc60a" /><circle cx="12" cy="12" r="6" fill="#fff" /><circle cx="12" cy="12" r="4.600" fill="#2a74e8" /></Ico></TaskButton>
        <TaskButton $run aria-label="Antivirus"><Ico w={26} h={26}><path d="m0 1 24 3-3 8-8 13z" fill="#8f86ff" /><path d="m0 1 13 4 4 12-4 8z" fill="#5b5df0" /><circle cx="18" cy="18" r="8" fill="#1ea885" /><path d="m14 18 3 3 5-6" stroke="#fff" strokeWidth="2" /></Ico></TaskButton>
        <TaskButton $on aria-label="Excel"><ExcelLogo size={22} /></TaskButton>
        <Weather>
          <Ico w={24} h={18}><path d="M6 17a5 5 0 0 1-1-10A7 7 0 0 1 18 6a5.500 5.500 0 0 1 0 11z" fill="#a9c8fa" /><path d="M6 17a5 5 0 0 1-5-5c5 3 16 3 22 0a5 5 0 0 1-5 5z" fill="#7fa9f0" /></Ico>
          <span>3°C</span><span>Nuageux</span>
        </Weather>
        <Tray>
          <Ico><path d="m0 3 10 1-3 12z" fill="#8c7cff" /><path d="m6 7 6 2-5 7z" fill="#43d6c8" /><circle cx="11.500" cy="5" r="4.500" fill="#1ea885" /><path d="m9.500 5 1.500 1.500L14 3.500" stroke="#fff" /></Ico>
          <Ico><path d="M1 15C-1 8 1 3 3 1l5 6 5-6c2 2 4 7 2 14l-3-2V8l-4 4-4-4v5z" fill="#2e57d8" /></Ico>
          <Ico><path d="M0 1h6l2 2h8v12H0z" fill="#6f6c80" /><path d="M3 5h13v10H3z" fill="#a4a1b2" /></Ico>
          <Ico><path d="M4 4 12 1l4 4v9H4z" fill="#28a8ea" /><path d="M0 4h9v9H0z" fill="#0f64b8" /><path d="M3 7h3v3H3z" stroke="#fff" /></Ico>
          <Ico><circle cx="8" cy="8" r="8" fill="#ff7800" /><path d="m8 3 5 9-5-2-5 2z" fill="#fff" /></Ico>
          <Ico><path d="M7 0c3 2 5 2 7 2 0 6-1 11-7 13C1 13 0 8 0 2c2 0 4 0 7-2z" fill="#fff" /><path d="M7 1v13M1 7h12" stroke="#222" /><circle cx="12" cy="11.500" r="4.500" fill="#149a48" /><path d="m10 11.500 1.500 1.500 2.500-3" stroke="#fff" /></Ico>
        </Tray>
        <Clock><span>09:03</span><span>20/12/2024</span></Clock>
        <Action aria-label="Notifications"><Ico w={17}><path d="M0 0h17v13h-6l-3 4v-4H0z" fill="#fff" /><path d="M3 4h11M3 6.500h11M3 9h7" stroke="#2a2420" strokeWidth="1.300" /></Ico></Action>
      </Taskbar>
    </Page>
  )
}

export default App
